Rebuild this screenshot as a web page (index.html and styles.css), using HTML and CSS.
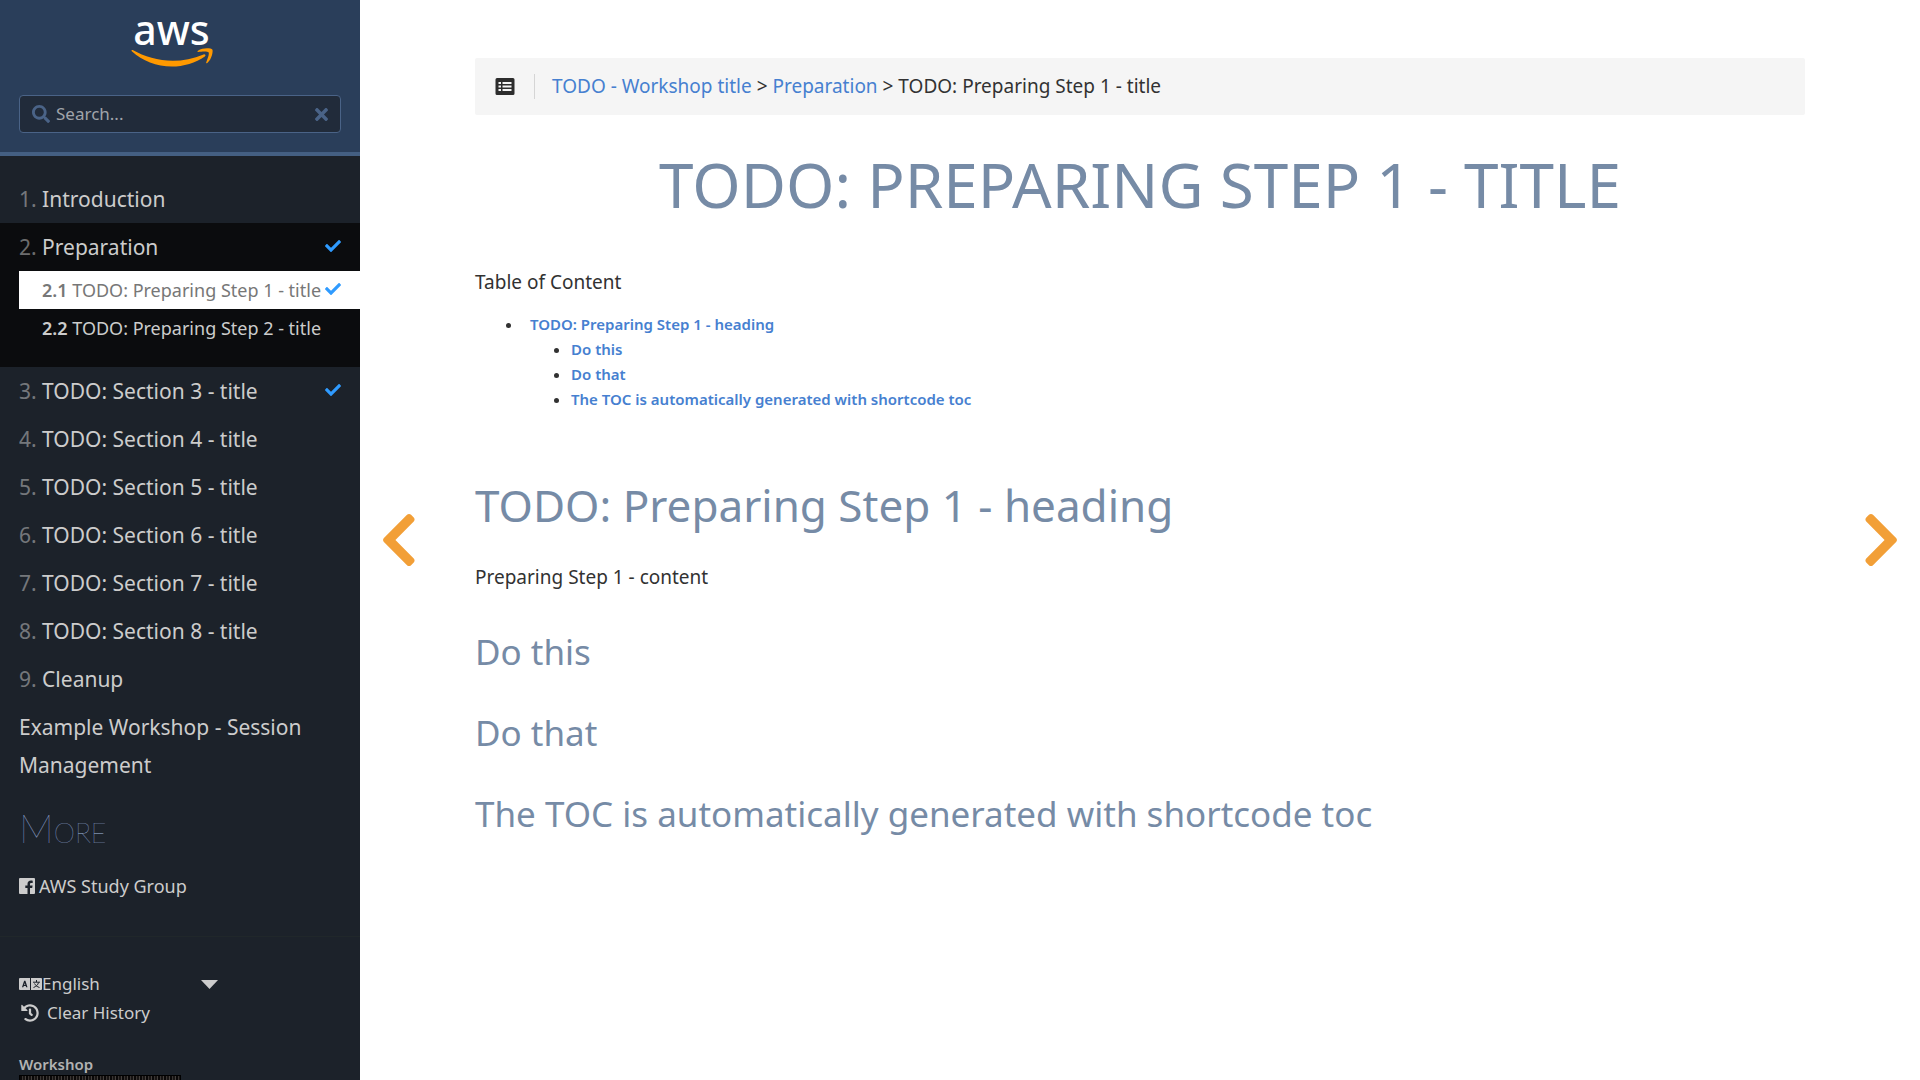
FILE: index.html
```html
<!DOCTYPE html>
<html lang="en">
<head>
<meta charset="utf-8">
<meta name="viewport" content="width=device-width, initial-scale=1">
<title>TODO: Preparing Step 1 - title</title>
<link rel="stylesheet" href="styles.css">
</head>
<body>
<svg class="defs" aria-hidden="true">
  <symbol id="check" viewBox="0 0 512 512"><path d="M173.898 439.404l-166.4-166.4c-9.997-9.997-9.997-26.206 0-36.204l36.203-36.204c9.997-9.998 26.207-9.998 36.204 0L192 312.69 432.095 72.596c9.997-9.997 26.207-9.997 36.204 0l36.203 36.204c9.997 9.997 9.997 26.206 0 36.204l-294.4 294.401c-9.998 9.997-26.207 9.997-36.204-.001z"/></symbol>
  <symbol id="chevron" viewBox="24 38 269 436"><path d="M285.476 272.971L91.132 467.314c-9.373 9.373-24.569 9.373-33.941 0l-22.667-22.667c-9.357-9.357-9.375-24.522-.04-33.901L188.505 256 34.484 101.255c-9.335-9.379-9.317-24.544.04-33.901l22.667-22.667c9.373-9.373 24.569-9.373 33.941 0L285.475 239.03c9.373 9.372 9.373 24.568.001 33.941z"/></symbol>
</svg>
<div class="layout">
  <aside class="sidebar">
    <header class="brand">
      <a class="logo" href="#" aria-label="aws">
        <span class="logo-text">aws</span>
        <svg class="logo-smile" viewBox="0 119 300 64" aria-hidden="true">
          <path d="M273.5,143.7c-32.9,24.3-80.7,37.2-121.8,37.2c-57.6,0-109.5-21.3-148.7-56.7c-3.1-2.8-0.3-6.6,3.4-4.4c42.4,24.6,94.7,39.5,148.8,39.5c36.5,0,76.6-7.6,113.5-23.2C274.2,133.6,278.9,139.7,273.5,143.7z"/>
          <path d="M287.2,128.1c-4.2-5.4-27.8-2.6-38.5-1.3c-3.2,0.4-3.7-2.4-0.8-4.5c18.8-13.2,49.7-9.4,53.3-5c3.6,4.5-1,35.4-18.6,50.2c-2.7,2.3-5.3,1.1-4.1-1.9C282.5,155.7,291.4,133.4,287.2,128.1z"/>
        </svg>
      </a>
      <div class="search">
        <label for="search" aria-label="Search"><svg class="icon-search" viewBox="0 0 512 512"><path d="M505 442.7L405.3 343c-4.5-4.5-10.6-7-17-7H372c27.6-35.3 44-79.7 44-128C416 93.1 322.9 0 208 0S0 93.1 0 208s93.1 208 208 208c48.3 0 92.7-16.4 128-44v16.3c0 6.4 2.5 12.5 7 17l99.7 99.7c9.4 9.4 24.6 9.4 33.9 0l28.3-28.3c9.4-9.4 9.4-24.6.1-34zM208 336c-70.7 0-128-57.2-128-128 0-70.7 57.2-128 128-128 70.7 0 128 57.2 128 128 0 70.7-57.2 128-128 128z"/></svg></label>
        <input id="search" type="text" placeholder="Search...">
        <button type="button" aria-label="Clear search"><svg class="icon-clear" viewBox="0 80 352 352"><path d="M242.72 256l100.07-100.07c12.28-12.28 12.28-32.19 0-44.48l-22.24-22.24c-12.28-12.28-32.19-12.28-44.48 0L176 189.28 75.93 89.21c-12.28-12.28-32.19-12.28-44.48 0L9.21 111.45c-12.28 12.28-12.28 32.19 0 44.48L109.28 256 9.21 356.07c-12.28 12.28-12.28 32.19 0 44.48l22.24 22.24c12.28 12.28 32.2 12.28 44.48 0L176 322.72l100.07 100.07c12.28 12.28 32.2 12.28 44.48 0l22.24-22.24c12.28-12.28 12.28-32.19 0-44.48L242.72 256z"/></svg></button>
      </div>
    </header>
    <nav class="menu" aria-label="Chapters">
      <ul class="topics">
        <li><a href="#"><span><b>1.</b> Introduction</span></a></li>
        <li class="parent">
          <a href="#"><span><b>2.</b> Preparation</span><svg class="check"><use href="#check"/></svg></a>
          <ul class="subtopics">
            <li class="active"><a href="#"><span><b>2.1</b> TODO: Preparing Step 1 - title</span><svg class="check"><use href="#check"/></svg></a></li>
            <li><a href="#"><span><b>2.2</b> TODO: Preparing Step 2 - title</span></a></li>
          </ul>
        </li>
        <li><a href="#"><span><b>3.</b> TODO: Section 3 - title</span><svg class="check"><use href="#check"/></svg></a></li>
        <li><a href="#"><span><b>4.</b> TODO: Section 4 - title</span></a></li>
        <li><a href="#"><span><b>5.</b> TODO: Section 5 - title</span></a></li>
        <li><a href="#"><span><b>6.</b> TODO: Section 6 - title</span></a></li>
        <li><a href="#"><span><b>7.</b> TODO: Section 7 - title</span></a></li>
        <li><a href="#"><span><b>8.</b> TODO: Section 8 - title</span></a></li>
        <li><a href="#"><span><b>9.</b> Cleanup</span></a></li>
        <li><a href="#"><span>Example Workshop - Session Management</span></a></li>
      </ul>
    </nav>
    <section class="more">
      <h2>More</h2>
      <a href="#"><svg class="icon-fb" viewBox="0 0 16 16"><path fill-rule="evenodd" d="M1 0h14a1 1 0 0 1 1 1v14a1 1 0 0 1-1 1h-4v-6h2.200l.4-2.400H11V6.300c0-.9.400-1.300 1.300-1.300h1.400V2.800C13.200 2.700 12.600 2.600 12 2.600c-2.200 0-3.500 1.300-3.500 3.500v1.500H6.300V10h2.200v6H1a1 1 0 0 1-1-1V1a1 1 0 0 1 1-1z"/></svg>AWS Study Group</a>
    </section>
    <section class="prefs">
      <div class="language">
        <label for="language" aria-label="Language"><svg class="icon-lang" viewBox="0 0 23 12"><path fill-rule="evenodd" d="M1 0h10v12H1a1 1 0 0 1-1-1V1a1 1 0 0 1 1-1zM3 9.300h1.300L4.800 8h1.900l.5 1.300h1.300L6.400 2.700H5.100zM5.200 6.900 5.750 5l.55 1.900zM12 0h10a1 1 0 0 1 1 1v10a1 1 0 0 1-1 1H12z"/><path class="glyph" d="M17.500 2v2M14 4.200h7M19.500 4.500c-.5 2.400-2.300 4-5 5M15.500 5.500c.8 1.800 2.700 3.300 5 4"/></svg></label>
        <select id="language"><option>English</option></select>
        <svg class="icon-caret" viewBox="0 0 17 9"><path d="M0 0h17L8.500 9z"/></svg>
      </div>
      <a class="clear-history" href="#"><svg class="icon-history" viewBox="0 0 512 512"><path d="M504 255.531c.253 136.640-111.180 248.372-247.820 248.468-59.015.042-113.223-20.530-155.822-54.911-11.077-8.940-11.905-25.541-1.839-35.607l11.267-11.267c8.609-8.609 22.353-9.551 31.891-1.984C173.062 425.135 212.781 440 256 440c101.705 0 184-82.311 184-184 0-101.705-82.311-184-184-184-48.814 0-93.149 18.969-126.068 49.932l50.754 50.754c10.080 10.080 2.941 27.314-11.313 27.314H24c-8.837 0-16-7.163-16-16V38.627c0-14.254 17.234-21.393 27.314-11.314l49.372 49.372C129.209 34.136 189.552 8 256 8c136.810 0 247.747 110.780 248 247.531zm-180.912 78.784l9.823-12.630c8.138-10.463 6.253-25.542-4.210-33.679L288 256.349V152c0-13.255-10.745-24-24-24h-16c-13.255 0-24 10.745-24 24v135.651l65.409 50.874c10.463 8.137 25.541 6.253 33.679-4.210z"/></svg>Clear History</a>
    </section>
    <footer class="counter">
      <strong>Workshop</strong>
      <div class="counter-digits"></div>
    </footer>
  </aside>
  <main class="page">
    <a class="turn turn-prev" href="#" aria-label="Previous page"><svg><use href="#chevron"/></svg></a>
    <article class="content">
      <nav class="breadcrumbs" aria-label="Breadcrumb">
        <button type="button" aria-label="Table of contents"><svg viewBox="0 0 19 17"><path fill-rule="evenodd" d="M1.500 0h16A1.500 1.500 0 0 1 19 1.500v14a1.500 1.500 0 0 1-1.500 1.500h-16A1.500 1.500 0 0 1 0 15.500v-14A1.500 1.500 0 0 1 1.500 0zM3 4v2h2.500V4zM7 4v2h9V4zM3 7.500v2h2.500v-2zM7 7.500v2h9v-2zM3 11v2h2.500v-2zM7 11v2h9v-2z"/></svg></button>
        <span class="trail"><a href="#">TODO - Workshop title</a> &gt; <a href="#">Preparation</a> &gt; TODO: Preparing Step 1 - title</span>
      </nav>
      <h1>TODO: Preparing Step 1 - title</h1>
      <p>Table of Content</p>
      <ul class="toc">
        <li><a href="#heading">TODO: Preparing Step 1 - heading</a>
          <ul>
            <li><a href="#this">Do this</a></li>
            <li><a href="#that">Do that</a></li>
            <li><a href="#toc">The TOC is automatically generated with shortcode toc</a></li>
          </ul>
        </li>
      </ul>
      <h2 id="heading">TODO: Preparing Step 1 - heading</h2>
      <p>Preparing Step 1 - content</p>
      <h3 id="this">Do this</h3>
      <h3 id="that">Do that</h3>
      <h3 id="toc">The TOC is automatically generated with shortcode toc</h3>
    </article>
    <a class="turn turn-next" href="#" aria-label="Next page"><svg><use href="#chevron"/></svg></a>
  </main>
</div>
</body>
</html>
```
FILE: styles.css
```css
* {
  box-sizing: border-box;
}

body {
  margin: 0;
  color: #323232;
  background: #fff;
  font: 19px/32px "Noto Sans", sans-serif;
}

ul {
  margin: 0;
  padding: 0;
}

a {
  color: #4680d0;
  text-decoration: none;
}

button {
  padding: 0;
  border: 0;
  background: none;
  cursor: pointer;
}

svg {
  display: block;
  flex: none;
  fill: currentColor;
}

.defs {
  position: absolute;
  width: 0;
  height: 0;
}

.layout {
  display: flex;
  height: 100vh;
}

/* Sidebar */
.sidebar {
  flex: 0 0 360px;
  overflow: hidden;
  color: #ccc;
  background: #1c222a;
}

.sidebar a {
  color: #ccc;
}

.brand {
  padding: 9px 19px 19px 19px;
  border-bottom: 4px solid #445f82;
  background: #2a3e5a;
}

.logo {
  display: flex;
  flex-direction: column;
  align-items: center;
  width: 81px;
  margin: 0 auto 27px 112px;
}

.logo-text {
  color: #fff;
  font-size: 41px;
  font-weight: 500;
  line-height: 40px;
}

.logo-smile {
  width: 81px;
  height: 19px;
  overflow: visible;
  fill: #f90;
}

.search {
  display: flex;
  align-items: center;
  gap: 6px;
  height: 38px;
  padding: 0 12px;
  border: 1px solid #4a6387;
  border-radius: 4px;
  color: #4a6387;
  background: #212b3a;
}

.search input {
  flex: 1;
  min-width: 0;
  padding: 0;
  border: 0;
  outline: 0;
  color: #ccc;
  background: none;
  font: 17px/24px "Noto Sans", sans-serif;
}

.search input::placeholder {
  color: #a0a4aa;
}

.search button {
  color: #4a6387;
}

.icon-search {
  width: 18px;
  height: 18px;
}

.icon-clear {
  width: 13px;
  height: 13px;
}

.menu {
  padding-top: 19px;
}

.menu ul {
  list-style: none;
}

.menu a {
  display: flex;
  justify-content: space-between;
  padding: 5px 19px;
  font-size: 21px;
  line-height: 38px;
}

.topics b {
  font-weight: 400;
  opacity: .5;
}

.check {
  width: 16px;
  height: 16px;
  margin-top: 10px;
  color: #2f9bff;
}

.parent {
  padding-bottom: 20px;
  background: #0b0c0e;
}

.menu .subtopics {
  margin-left: 19px;
}

.menu .subtopics a {
  padding: 0 19px 0 23px;
  font-size: 18px;
  white-space: nowrap;
}

.menu .subtopics b {
  font-weight: 600;
  opacity: 1;
}

.menu .active a {
  color: #777;
  background: #fff;
}

.more {
  padding: 14px 19px 34px;
  border-bottom: 1px solid #20272a;
}

.more h2 {
  margin: 0 0 17px;
  color: #a3bce0;
  font: small-caps 100 39px/50px Lato, "Noto Sans", sans-serif;
}

.more a {
  display: flex;
  align-items: center;
  gap: 4px;
  font-size: 18px;
}

.icon-fb {
  width: 16px;
  height: 16px;
}

.prefs {
  padding: 32px 19px 0;
  font-size: 17px;
}

.language {
  display: flex;
  align-items: center;
  width: 199px;
  height: 30px;
}

.language select {
  flex: 1;
  padding: 0;
  border: 0;
  appearance: none;
  color: inherit;
  background: none;
  font: inherit;
}

.icon-lang {
  width: 23px;
  height: 12px;
}

.icon-lang .glyph {
  fill: none;
  stroke: #1c222a;
}

.icon-caret {
  width: 17px;
  height: 9px;
}

.clear-history {
  display: flex;
  align-items: center;
  gap: 8px;
  padding-left: 2px;
  line-height: 28px;
}

.icon-history {
  width: 18px;
  height: 18px;
}

.counter {
  padding: 26px 19px 0;
  color: #b2b2b2;
  font-size: 15px;
  line-height: 22px;
}

.counter strong {
  display: block;
  font-weight: 600;
}

.counter-digits {
  width: 162px;
  height: 20px;
  border: 1px solid #000;
  background: repeating-linear-gradient(90deg, #0a0808 0 2px, #383432 2px 3px, #171413 3px 5px, #44403d 5px 6px);
}

/* Page */
.page {
  display: flex;
  flex: 1;
  min-width: 0;
  overflow: auto;
}

.turn {
  display: flex;
  position: sticky;
  top: 0;
  flex: 0 0 115px;
  align-items: center;
  height: 100vh;
  padding: 0 23px;
  color: #f29f37;
}

.turn svg {
  width: 32px;
  height: 52px;
}

.turn-prev svg {
  transform: scaleX(-1);
}

.turn-next {
  justify-content: flex-end;
}

.content {
  flex: 1;
  min-width: 0;
  padding: 58px 0 40px;
}

.breadcrumbs {
  display: flex;
  align-items: center;
  padding: 16px 20px;
  border-radius: 2px;
  background: #f5f5f5;
}

.breadcrumbs button {
  width: 40px;
  height: 25px;
  margin-right: 17px;
  border-right: 1px solid #d5d5d5;
  color: #2d2d2d;
}

.breadcrumbs svg {
  width: 20px;
  height: 17px;
}

.trail {
  line-height: 25px;
}

h1,
h2,
h3 {
  color: #768ba6;
  font-weight: 400;
}

h1 {
  margin: 30px 0 43px;
  font-size: 62px;
  line-height: 78px;
  text-align: center;
  text-transform: uppercase;
}

p {
  margin: 0;
}

.toc {
  margin: 14px 0 65px;
  padding-left: 48px;
  font-size: 15px;
  line-height: 25px;
}

.toc > li {
  padding-left: 7px;
}

.toc ul {
  padding-left: 41px;
  list-style: disc;
}

.toc a {
  font-weight: 600;
}

.content h2 {
  margin: 0 0 28px;
  font-size: 44px;
  line-height: 56px;
}

h3 {
  margin: 37px 0;
  font-size: 35px;
  line-height: 44px;
}
```
